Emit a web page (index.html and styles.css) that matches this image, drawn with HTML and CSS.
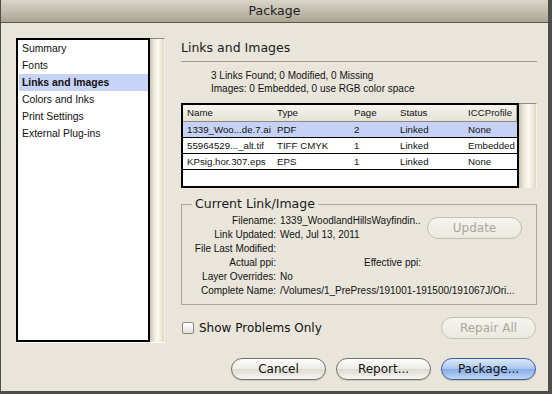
FILE: index.html
```html
<!DOCTYPE html>
<html lang="en">
<head>
    <meta charset="UTF-8">
    <title>Package</title>
    <link rel="stylesheet" href="styles.css">
</head>
<body>
    <div class="window">
        <div class="titlebar">Package</div>
        <div class="content">
            <div class="main">
                <div class="sidebar">
                    <ul class="nav">
                        <li>Summary</li>
                        <li>Fonts</li>
                        <li class="selected">Links and Images</li>
                        <li>Colors and Inks</li>
                        <li>Print Settings</li>
                        <li>External Plug-ins</li>
                    </ul>
                    <div class="scrolltrack"></div>
                </div>
                <div class="panel">
                    <h2 class="heading">Links and Images</h2>
                    <div class="summary">
                        <div>3 Links Found; 0 Modified, 0 Missing</div>
                        <div>Images: 0 Embedded, 0 use RGB color space</div>
                    </div>
                    <div class="tablebox">
                        <div class="grid">
                            <div class="row head">
                                <span>Name</span><span>Type</span><span>Page</span><span>Status</span><span>ICCProfile</span>
                            </div>
                            <div class="row selected">
                                <span>1339_Woo...de.7.ai</span><span>PDF</span><span>2</span><span>Linked</span><span>None</span>
                            </div>
                            <div class="row">
                                <span>55964529..._alt.tif</span><span>TIFF CMYK</span><span>1</span><span>Linked</span><span>Embedded</span>
                            </div>
                            <div class="row">
                                <span>KPsig.hor.307.eps</span><span>EPS</span><span>1</span><span>Linked</span><span>None</span>
                            </div>
                            <div class="row empty"></div>
                        </div>
                        <div class="scrolltrack"></div>
                    </div>
                    <fieldset class="current">
                        <legend>Current Link/Image</legend>
                        <div class="details">
                            <span class="label">Filename:</span>
                            <span class="value">1339_WoodlandHillsWayfindin..</span>
                            <button class="btn update" disabled>Update</button>
                            <span class="label">Link Updated:</span>
                            <span class="value">Wed, Jul 13, 2011</span>
                            <span class="label">File Last Modified:</span>
                            <span class="value"></span>
                            <span class="label">Actual ppi:</span>
                            <span class="value"><span class="effective">Effective ppi:</span></span>
                            <span class="label">Layer Overrides:</span>
                            <span class="value">No</span>
                            <span class="label">Complete Name:</span>
                            <span class="value wide">/Volumes/1_PrePress/191001-191500/191067J/Ori...</span>
                        </div>
                    </fieldset>
                    <div class="options">
                        <label class="check"><span class="box"></span>Show Problems Only</label>
                        <button class="btn" disabled>Repair All</button>
                    </div>
                </div>
            </div>
            <div class="footer">
                <button class="btn">Cancel</button>
                <button class="btn">Report...</button>
                <button class="btn primary">Package...</button>
            </div>
        </div>
    </div>
</body>
</html>
```
FILE: styles.css
```css
* {
    box-sizing: border-box;
}
html, body {
    margin: 0;
}
body {
    width: 552px;
    height: 394px;
    overflow: hidden;
    background: #4f4d47;
    font-family: "Liberation Sans", Arial, sans-serif;
    font-size: 10px;
    color: #111;
}
.window {
    margin-left: 1px;
    width: 547px;
    height: 391px;
    background: #e9e5da;
}
.titlebar {
    height: 23px;
    border-bottom: 1px solid #5b574b;
    background: linear-gradient(#dad5c7, #aba493);
    text-align: center;
    font: 12.5px/22px "DejaVu Sans", sans-serif;
    color: #222;
}
.content {
    padding: 15px 11px 0 15px;
}
.main {
    display: flex;
    gap: 16px;
}

/* left list */
.sidebar {
    display: flex;
    width: 149px;
    height: 305px;
    border-bottom: 1px solid #fff;
}
.nav {
    flex: 1;
    margin: 0;
    padding: 0 0 0 1px;
    list-style: none;
    background: #fff;
    border: 2px solid #000;
    font-size: 10.4px;
}
.nav li {
    height: 17px;
    line-height: 17px;
    padding-left: 3px;
}
.nav li.selected {
    background: #c7d4f7;
    font-weight: bold;
}
.scrolltrack {
    width: 15px;
    flex: none;
    border-top: 1px solid #8e8a7f;
    border-right: 1px solid #f4f1e6;
    background: linear-gradient(to right, #cbc5b2, #eeeadb 30%, #fcfaf0 55%, #f2eedf 75%, #ddd7c4);
}

/* right panel */
.panel {
    width: 356px;
    display: flex;
    flex-direction: column;
}
.heading {
    margin: 0;
    padding: 2px 0 5px;
    border-bottom: 1px solid #a19d92;
    font: normal 12.5px/16px "DejaVu Sans", sans-serif;
    color: #1a1a1a;
}
.summary {
    padding: 7px 0 8px 30px;
    line-height: 13px;
}
.tablebox {
    display: flex;
    height: 85px;
}
.tablebox .scrolltrack {
    width: 18px;
}
.grid {
    width: 338px;
    flex: none;
    border: 2px solid #000;
    background: #fff;
    font-size: 9.7px;
}
.row {
    display: grid;
    grid-template-columns: 90px 77px 46px 69px 52px;
    height: 16px;
    line-height: 15px;
    border-bottom: 1px solid #000;
}
.row span {
    padding-left: 4px;
    white-space: nowrap;
    overflow: hidden;
}
.row span:last-child {
    padding-left: 3px;
}
.row.head {
    height: 17px;
    line-height: 16px;
    border-bottom-color: #8c887d;
    background: linear-gradient(#f6f4ec, #e5e1d5);
}
.row.head span:last-child {
    border-right: 1px solid #a9a59a;
}
.row.selected {
    background: #c5d2f5;
}
.row.empty {
    border-bottom: none;
}

/* current link group */
.current {
    margin: 8px 0 0;
    padding: 2px 14px 6px 8px;
    min-width: 0;
    border: 1px solid #a8a59c;
}
.current legend {
    margin-left: 2px;
    padding: 0 3px;
    font: 12.5px/16px "DejaVu Sans", sans-serif;
    color: #1a1a1a;
}
.details {
    display: grid;
    grid-template-columns: 86px 1fr 95px;
    grid-auto-rows: 14px;
    column-gap: 4px;
    line-height: 14px;
}
.label {
    grid-column: 1;
    text-align: right;
    white-space: nowrap;
}
.value {
    grid-column: 2;
    white-space: nowrap;
}
.value.wide {
    grid-column: 2 / 4;
}
.effective {
    margin-left: 84px;
}
.update {
    grid-column: 3;
    grid-row: 1 / span 2;
    align-self: center;
}

/* buttons */
.btn {
    width: 95px;
    height: 22px;
    padding: 0;
    border: 1px solid #76726a;
    border-radius: 11px;
    background: linear-gradient(#fefefd, #eeece6 48%, #dedbd3 52%, #f6f5f1);
    box-shadow: 0 1px 1px rgba(0, 0, 0, 0.15);
    font: 12px "DejaVu Sans", sans-serif;
    color: #111;
}
.btn:disabled {
    border-color: #c3bfb4;
    background: linear-gradient(#f6f4ef, #ebe8df);
    box-shadow: none;
    color: #aaa69c;
}
.btn.primary {
    border-color: #3e5e9b;
    background: linear-gradient(#dde9f9, #aac7ef 48%, #87ace6 52%, #bfd7f7);
}
.options {
    display: flex;
    align-items: center;
    justify-content: space-between;
    height: 22px;
    margin-top: 12px;
    padding: 0 1px;
}
.check {
    display: flex;
    align-items: center;
    gap: 5px;
    font: 12px "DejaVu Sans", sans-serif;
    color: #111;
}
.box {
    width: 12px;
    height: 12px;
    border: 1px solid #8a867d;
    border-radius: 2px;
    background: linear-gradient(#fff, #e2e0da);
}
.footer {
    display: flex;
    justify-content: flex-end;
    gap: 10px;
    margin-top: 15px;
    padding-right: 1px;
}
```
